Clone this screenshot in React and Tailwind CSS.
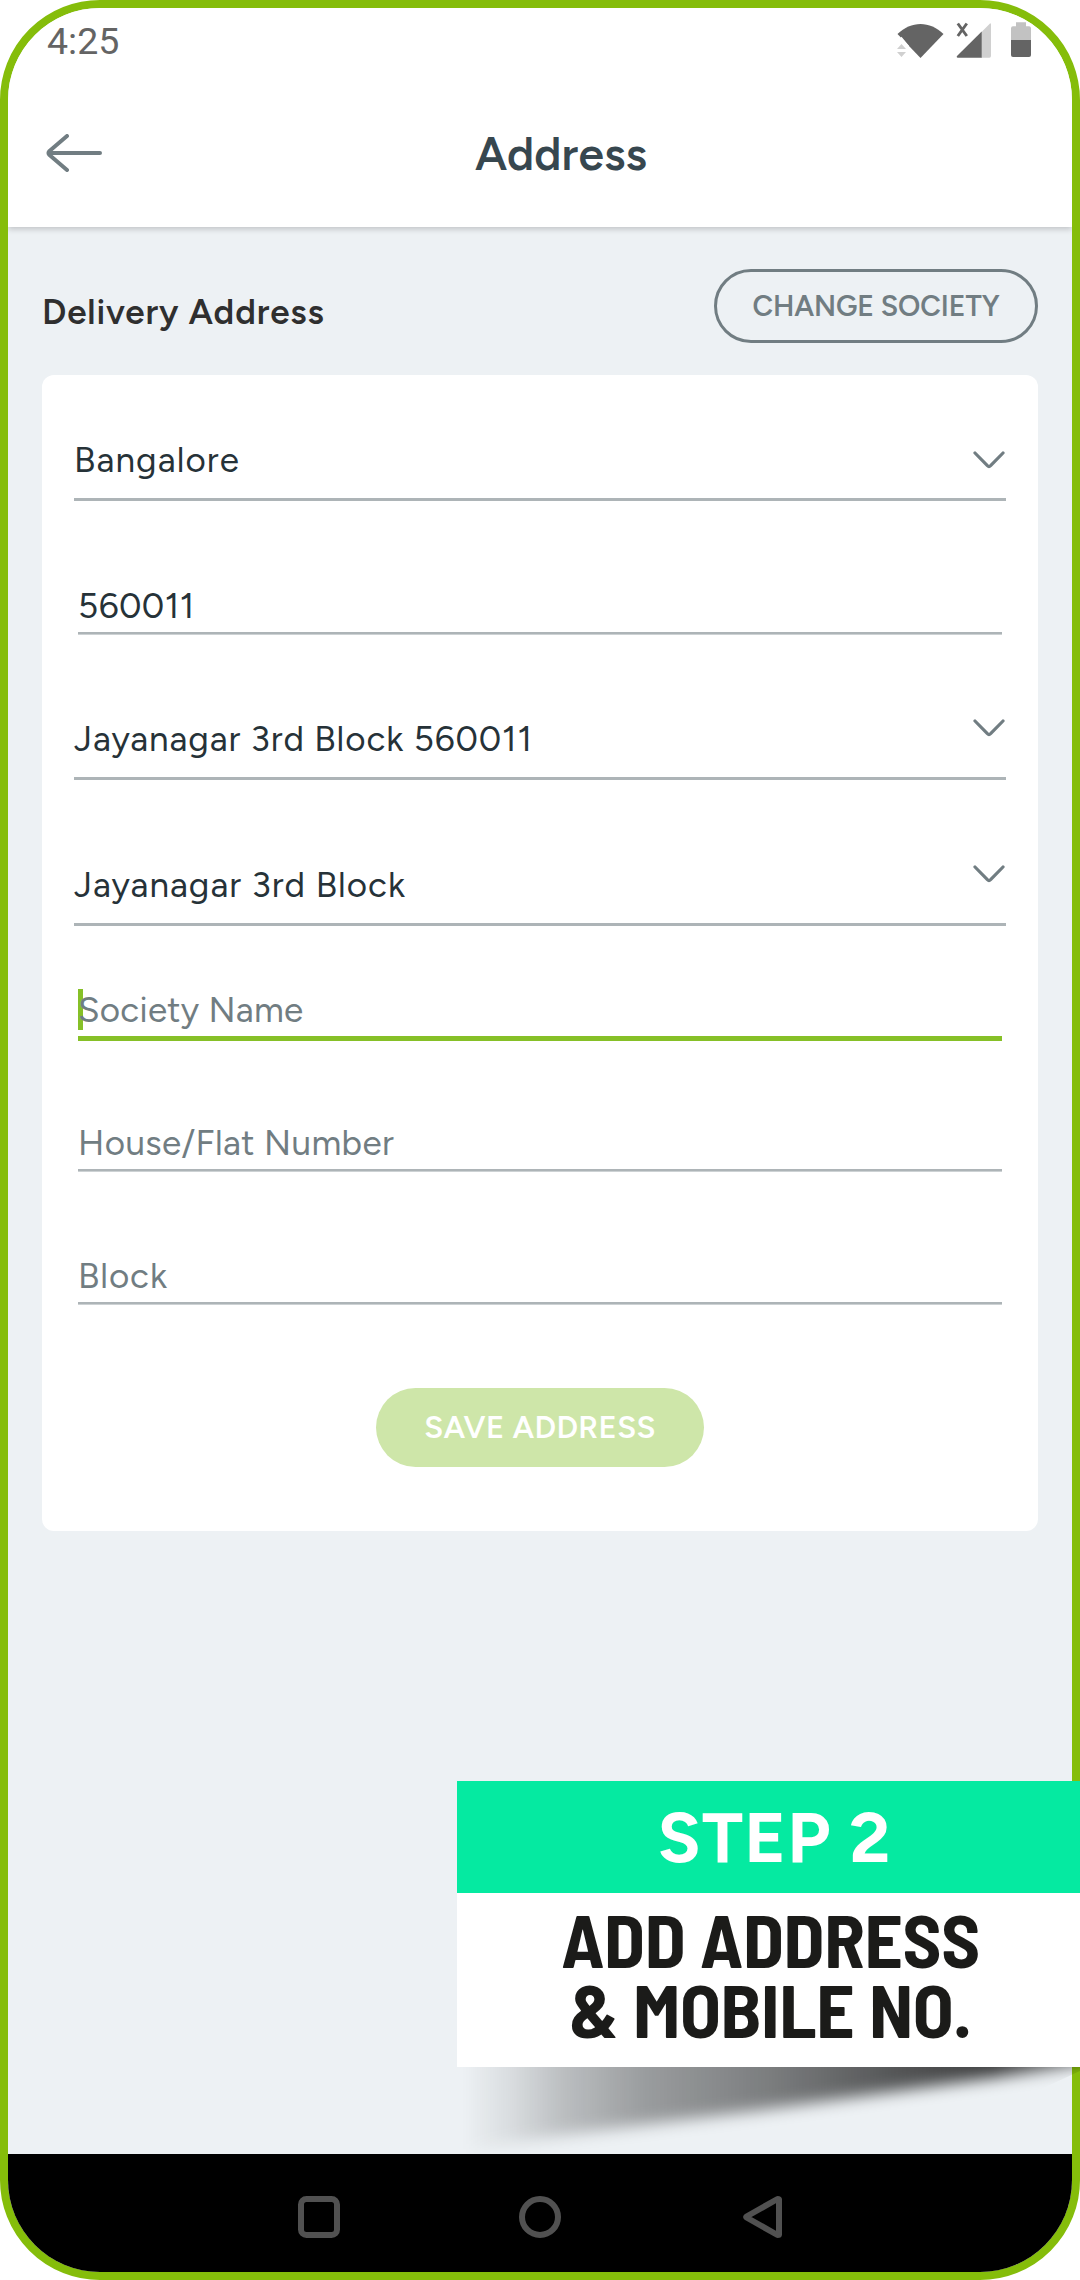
import React from "react";

const SANS = "font-['Figtree',Lato,'Open_Sans',sans-serif]";

function StatusIcons() {
  return (
    <div className="-mt-[2px] flex items-start">
      <svg width="47" height="36" viewBox="0 0 47 36" fill="#646464">
        <path d="M0.5 12 C14 -1.5 33 -1.5 46.5 12 L23.5 36 Z" />
        <path d="M0 22.5 h9 l-4.5 -5.5 z M0 30 h9 l-4.5 5.5 z" fill="#fff" stroke="#fff" strokeWidth="3" />
        <path d="M0 27 h9 l-4.5 -5 z M0 30 h9 l-4.5 5 z" fill="#d0d0d0" />
      </svg>
      <svg className="ml-3" width="36" height="36" viewBox="0 0 36 36">
        <path d="M35 1.5 V34 q0 1.7 -1.7 1.7 H25 V10.5 L34 1.5 z" fill="#d0d0d0" />
        <path d="M25.7 9.5 V35.7 H1.5 q-1.5 -0.6 -0.5 -1.8 z" fill="#646464" />
        <path d="M1.8 1.5 L10.8 14 M10.8 1.5 L1.8 14" stroke="#646464" strokeWidth="2.9" />
      </svg>
      <svg className="ml-[19px]" width="20" height="36" viewBox="0 0 20 36">
        <path d="M5 0.3 h10 v3.9 h3 q2 0 2 2 V18 H0 V6.2 q0 -2 2 -2 h3 z" fill="#c2c2c2" />
        <path d="M0 18 H20 V33 q0 2 -2 2 H2 q-2 0 -2 -2 z" fill="#646464" />
      </svg>
    </div>
  );
}

function Chevron({ className = "" }) {
  return (
    <svg className={"mr-px " + className} width="32" height="18" viewBox="0 0 32 18" fill="none" stroke="#717d82" strokeWidth="3.2" strokeLinecap="round" strokeLinejoin="round">
      <path d="M2 2 L14.4 14.7 Q16 16.2 17.6 14.7 L30 2" />
    </svg>
  );
}

function Picker({ value, className, text = "", chevron = "" }) {
  return (
    <div className={"flex items-center justify-between border-b-[3px] border-[#adb4b7] pb-[8px] text-[#263238] " + className}>
      <span className={"text-[35px] leading-[60px] " + text}>{value}</span>
      <Chevron className={chevron} />
    </div>
  );
}

function Input({ value, className }) {
  return (
    <div className={"mx-1 mb-px border-b-2 border-[#adb4b7] pb-[2px] text-[35px] leading-[48px] shadow-[0_1px_0_#cdd2d4] " + className}>
      {value}
    </div>
  );
}

export default function App() {
  return (
    <div className={"relative h-[2280px] w-[1080px] overflow-hidden bg-white " + SANS}>
      <div className="flex h-full flex-col overflow-hidden rounded-[100px] border-8 border-[#85bd0a] bg-[#edf1f4]">
        <header className="relative h-[219px] shrink-0 bg-white shadow-[0_2px_6px_rgba(0,0,0,0.2)]">
          <div className="flex h-[66px] items-center justify-between pl-[39px] pr-[41px]">
            <span className="font-[Roboto] text-[37.5px] leading-[44px] text-[#646464]">4:25</span>
            <StatusIcons />
          </div>
          <div className="flex h-[153px] items-center pl-[38px] pt-[6px]">
            <svg className="mb-[2px]" width="56" height="38" viewBox="0 0 56 38" fill="none" stroke="#717d82" strokeWidth="4" strokeLinecap="round" strokeLinejoin="round">
              <path d="M21 2 L3.5 17 Q1.6 19 3.5 21 L21 36 M3 19 H54" />
            </svg>
            <h1 className="ml-[373px] text-[46px] font-semibold leading-[56px] tracking-[0.15px] text-[#37474f]">Address</h1>
          </div>
        </header>

        <main className="flex-1 px-[34px] pt-[42px]">
          <div className="flex h-[74px] items-center justify-between">
            <h2 className="pt-[12px] text-[35px] font-semibold leading-[44px] tracking-[0.85px] text-[#2f2f2f]">Delivery Address</h2>
            <button className="flex h-[74px] w-[324px] items-center justify-center rounded-full border-[3px] border-[#717d82] text-[28.5px] font-semibold tracking-[-0.1px] text-[#717d82]">
              CHANGE SOCIETY
            </button>
          </div>

          <section className="mt-8 flex h-[1156px] flex-col rounded-xl bg-white px-8">
            <Picker value="Bangalore" className="mt-[55px]" text="tracking-[1.1px]" />
            <Input value="560011" className="mt-[81px] tracking-[0.5px] text-[#263238]" />
            <Picker value="Jayanagar 3rd Block 560011" className="mt-[74px]" text="tracking-[0.9px]" chevron="mb-[23px]" />
            <Picker value="Jayanagar 3rd Block" className="mt-[75px]" text="tracking-[1px]" chevron="mb-[23px]" />
            <div className="relative mx-1 mt-[60px] border-b-[5px] border-[#86c027] pb-[2px] text-[35px] leading-[48px] tracking-[0.28px] text-[#717d82]">
              <span className="absolute left-0 top-[3px] h-[41px] w-[5px] bg-[#86c027]" />
              <span className="relative">Society Name</span>
            </div>
            <Input value="House/Flat Number" className="mt-[78px] tracking-[0.4px] text-[#717d82]" />
            <Input value="Block" className="mt-[80px] tracking-[0.9px] text-[#717d82]" />
            <button className="mt-[83px] flex h-[79px] w-[328px] items-center justify-center self-center rounded-full bg-[#cee6a9] pt-px text-[31px] font-semibold tracking-[0.37px] text-white">
              SAVE ADDRESS
            </button>
          </section>
        </main>

        <nav className="flex h-[118px] shrink-0 items-center bg-black pl-[290px] pt-[8px]">
          <svg width="42" height="42" viewBox="0 0 42 42" fill="none" stroke="#515151" strokeWidth="6">
            <rect x="3" y="3" width="36" height="36" rx="5.5" />
          </svg>
          <svg className="ml-[179px]" width="42" height="42" viewBox="0 0 42 42" fill="none" stroke="#515151" strokeWidth="6">
            <circle cx="21" cy="21" r="18" />
          </svg>
          <svg className="ml-[181px]" width="42" height="42" viewBox="0 0 42 42" fill="none" stroke="#515151" strokeWidth="6" strokeLinejoin="round">
            <path d="M35.5 3 Q37 3 37 3.5 V38.5 Q37 39 35.5 39 L4.5 21.5 Q4 21 4.5 20.5 z" />
          </svg>
        </nav>
      </div>

      <aside className="absolute right-0 top-[1781px] w-[623px]">
        <div className="flex h-[112px] items-center justify-center bg-[#05eaa1] pl-3 pt-[2px] text-[71px] font-bold leading-[84px] tracking-[1.1px] text-white">STEP 2</div>
        <div className="relative z-10 h-[174px] bg-white pl-[4px] pt-[10px] text-center font-['Barlow_Semi_Condensed','Roboto_Condensed',Roboto,sans-serif] text-[75px] font-bold leading-[70px] tracking-[-0.35px] text-[#1b1b19]">
          <div>ADD ADDRESS</div>
          <div>&amp; MOBILE NO.</div>
        </div>
        <svg className="absolute left-0 top-full" width="623" height="87" viewBox="0 0 623 87">
          <defs>
            <linearGradient id="cast" x1="0" y1="0" x2="623" y2="0" gradientUnits="userSpaceOnUse">
              <stop offset="0.01" stopColor="#000" stopOpacity="0" />
              <stop offset="0.09" stopColor="#000" stopOpacity="0.09" />
              <stop offset="0.17" stopColor="#000" stopOpacity="0.21" />
              <stop offset="0.3" stopColor="#000" stopOpacity="0.35" />
              <stop offset="0.5" stopColor="#000" stopOpacity="0.48" />
              <stop offset="0.7" stopColor="#000" stopOpacity="0.64" />
              <stop offset="0.86" stopColor="#000" stopOpacity="0.74" />
              <stop offset="1" stopColor="#000" stopOpacity="0.55" />
            </linearGradient>
            <filter id="soft" x="-10%" y="-50%" width="120%" height="200%">
              <feGaussianBlur stdDeviation="3 8" />
            </filter>
            <clipPath id="edge">
              <path d="M0 0 H623 V4 L580 24 V87 H0 Z" />
            </clipPath>
          </defs>
          <g clipPath="url(#edge)">
            <path d="M0 -40 H660 V-8 L540 10 L303 43 L105 68 L0 84 Z" fill="url(#cast)" filter="url(#soft)" />
          </g>
        </svg>
      </aside>
    </div>
  );
}
